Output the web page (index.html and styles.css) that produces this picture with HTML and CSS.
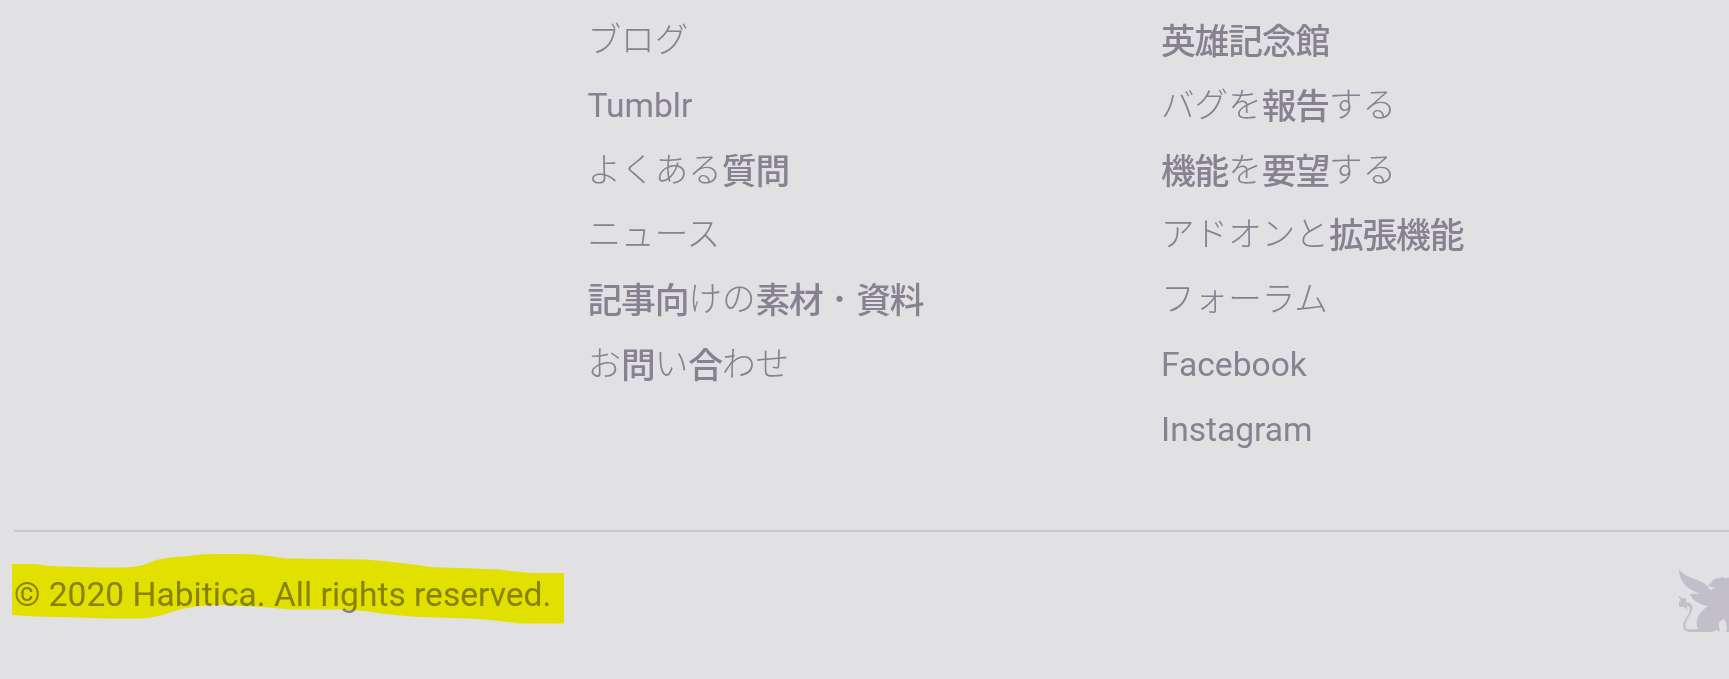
FILE: index.html
```html
<!DOCTYPE html>
<html lang="ja">
<head>
<meta charset="utf-8">
<title>Habitica</title>
<link rel="stylesheet" href="styles.css">
</head>
<body>
<footer class="footer">
  <div class="columns">
    <ul class="links">
      <li><span class="kana">ブログ</span></li>
      <li>Tumblr</li>
      <li><span class="kana">よくある</span><span class="kanji">質問</span></li>
      <li><span class="kana">ニュース</span></li>
      <li><span class="kanji">記事向</span><span class="kana">けの</span><span class="kanji">素材</span><span class="kana dot">・</span><span class="kanji">資料</span></li>
      <li><span class="kana">お</span><span class="kanji">問</span><span class="kana">い</span><span class="kanji">合</span><span class="kana">わせ</span></li>
    </ul>
    <ul class="links">
      <li><span class="kanji">英雄記念館</span></li>
      <li><span class="kana">バグを</span><span class="kanji">報告</span><span class="kana">する</span></li>
      <li><span class="kanji">機能</span><span class="kana">を</span><span class="kanji">要望</span><span class="kana">する</span></li>
      <li><span class="kana">アドオンと</span><span class="kanji">拡張機能</span></li>
      <li><span class="kana">フォーラム</span></li>
      <li>Facebook</li>
      <li>Instagram</li>
    </ul>
  </div>
  <div class="bottom">
    <div class="copyright">© 2020 Habitica. All rights reserved.
      <svg class="marker" viewBox="12 550 552 76" width="552" height="76" aria-hidden="true"><path fill="#ffff00" d="M12 564H35Q48 566 60 566.5L100 567.5H125Q140 567 150 562.500Q160 557.500 185 556.500Q200 554 212 554H245Q265 555 285 558.500L365 559.500Q400 562 430 567L500 569.500Q515 572 533 573H564V623.500H520Q495 620 470 618.500L420 617Q390 615 365 611L340 609.500H290Q255 606 220 605Q190 605 170 612.500Q155 618 140 618.500H110L60 617L35 616.500L12 615Z"/></svg>
    </div>
    <svg class="gryphon" viewBox="1677 569 52 64" width="52" height="64" aria-hidden="true"><path fill="#c2bfc8" d="M1679 569.500C1684 575 1691 578 1697 580C1703 582 1708 585 1710 590L1715 588L1707.500 585.500L1711 583C1713 579 1716 577.500 1719 578.500L1723 577L1725 578.500L1729 577.500V632H1719L1717 630L1712 632H1690C1682 631 1682 625 1685 620L1689 613C1691 609 1690 606 1687 606V609.500L1684 607H1679V602L1681 601L1678 595L1682 598.500L1686 598V602C1693 603 1694 608 1691 613C1687 619 1683 627 1687 629C1690 630 1694 629 1698 629C1695 623 1697 615 1703 610L1708 606C1699 605 1692 600 1690 594L1701 593.500C1689 591 1679 582 1679 569.500Z"/><path fill="#e1e0e3" d="M1720 629C1717 623 1720 621 1724 619C1727 621 1726 627 1727 629L1726 632H1719Z"/></svg>
  </div>
</footer>
</body>
</html>
```
FILE: styles.css
```css
body {
  margin: 0;
  background: #e1e0e3;
  color: #878190;
  font-family: Roboto, "Noto Sans CJK JP", sans-serif;
  font-size: 33.6px;
  overflow: hidden;
}

.footer {
  padding: 9px 0 0 14px;
}

.columns {
  display: grid;
  grid-template-columns: 573.5px 1fr;
  padding-left: 573.5px;
  height: 521px;
}

.links {
  margin: 0;
  padding: 0;
  list-style: none;
}

.links li {
  height: 64.75px;
  line-height: 64.75px;
  white-space: nowrap;
}

.kana {
  font-weight: 300;
}

.kanji {
  font-size: 34.8px;
  font-weight: 500;
  letter-spacing: -1.2px;
  line-height: 0;
  vertical-align: -1.5px;
}

.dot {
  line-height: 0;
  vertical-align: -1px;
}

.bottom {
  display: flex;
  justify-content: space-between;
  border-top: 2px solid #c8c7cb;
  height: 147px;
}

.copyright {
  position: relative;
  margin-top: 38px;
  line-height: 50px;
  white-space: nowrap;
}

.marker {
  position: absolute;
  left: -2px;
  top: -20px;
  mix-blend-mode: multiply;
}

.gryphon {
  margin-top: 37px;
}
```
